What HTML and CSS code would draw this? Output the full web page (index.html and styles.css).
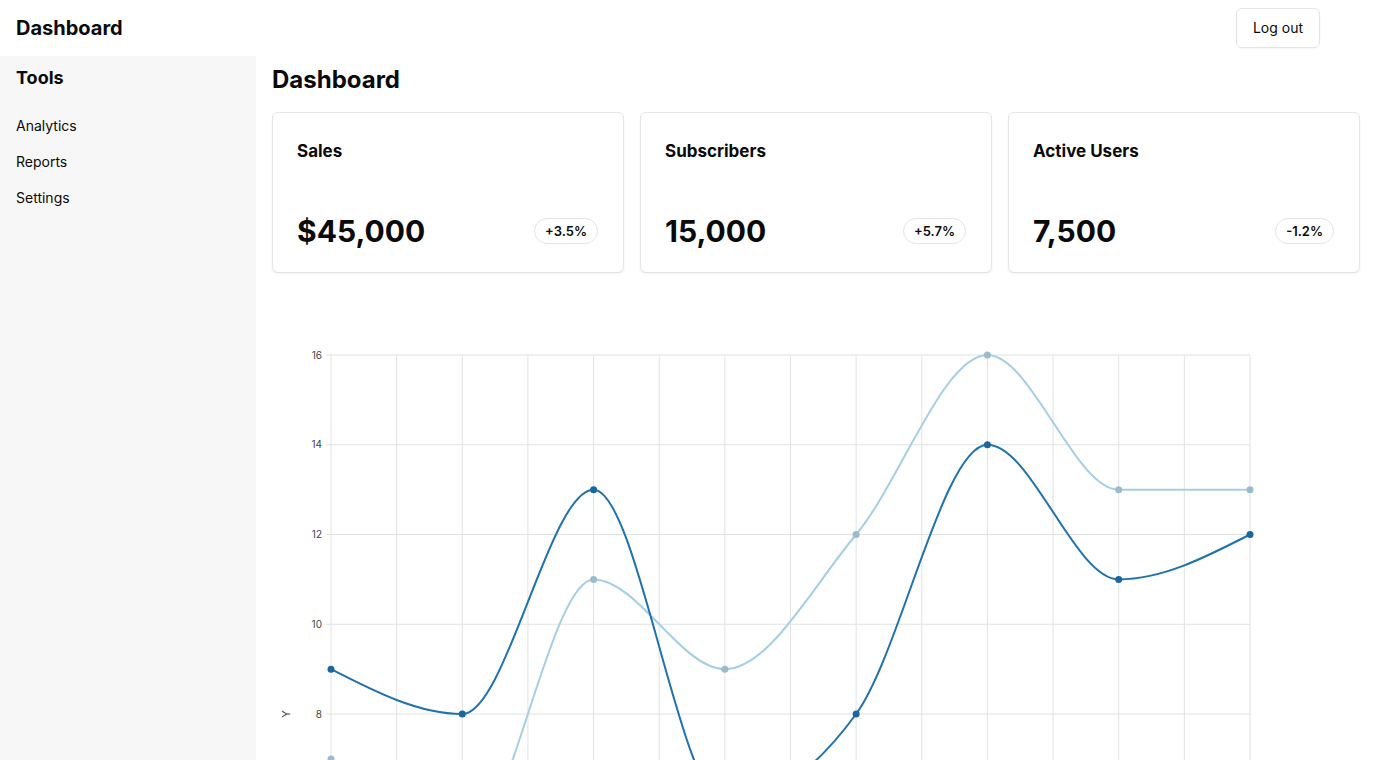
FILE: index.html
```
<!DOCTYPE html>
<html lang="en">
<head>
<meta charset="utf-8">
<title>Dashboard</title>
<link rel="stylesheet" href="styles.css">
</head>
<body>
<header class="topbar">
  <div class="brand">Dashboard</div>
  <button class="btn">Log out</button>
</header>
<div class="layout">
  <aside class="sidebar">
    <h2 class="side-title">Tools</h2>
    <nav class="side-nav">
      <a href="#">Analytics</a>
      <a href="#">Reports</a>
      <a href="#">Settings</a>
    </nav>
  </aside>
  <main class="main">
    <h1 class="page-title">Dashboard</h1>
    <section class="cards">
      <div class="card">
        <div class="card-title">Sales</div>
        <div class="card-row"><span class="card-value">$45,000</span><span class="badge">+3.5%</span></div>
      </div>
      <div class="card">
        <div class="card-title">Subscribers</div>
        <div class="card-row"><span class="card-value">15,000</span><span class="badge">+5.7%</span></div>
      </div>
      <div class="card">
        <div class="card-title">Active Users</div>
        <div class="card-row"><span class="card-value">7,500</span><span class="badge">-1.2%</span></div>
      </div>
    </section>
    <svg class="chart" width="1088" height="820" viewBox="272 289 1088 820" xmlns="http://www.w3.org/2000/svg">
      <g class="grid">
        <line x1="331" y1="355" x2="331" y2="1073"/>
        <line x1="396.64" y1="355" x2="396.64" y2="1073"/>
        <line x1="462.29" y1="355" x2="462.29" y2="1073"/>
        <line x1="527.93" y1="355" x2="527.93" y2="1073"/>
        <line x1="593.57" y1="355" x2="593.57" y2="1073"/>
        <line x1="659.21" y1="355" x2="659.21" y2="1073"/>
        <line x1="724.86" y1="355" x2="724.86" y2="1073"/>
        <line x1="790.5" y1="355" x2="790.5" y2="1073"/>
        <line x1="856.14" y1="355" x2="856.14" y2="1073"/>
        <line x1="921.79" y1="355" x2="921.79" y2="1073"/>
        <line x1="987.43" y1="355" x2="987.43" y2="1073"/>
        <line x1="1053.07" y1="355" x2="1053.07" y2="1073"/>
        <line x1="1118.71" y1="355" x2="1118.71" y2="1073"/>
        <line x1="1184.36" y1="355" x2="1184.36" y2="1073"/>
        <line x1="1250" y1="355" x2="1250" y2="1073"/>
        <line x1="326" y1="355" x2="1250" y2="355"/>
        <line x1="326" y1="444.75" x2="1250" y2="444.75"/>
        <line x1="326" y1="534.5" x2="1250" y2="534.5"/>
        <line x1="326" y1="624.25" x2="1250" y2="624.25"/>
        <line x1="326" y1="714" x2="1250" y2="714"/>
        <line x1="326" y1="803.75" x2="1250" y2="803.75"/>
        <line x1="326" y1="893.5" x2="1250" y2="893.5"/>
        <line x1="326" y1="983.25" x2="1250" y2="983.25"/>
        <line x1="326" y1="1073" x2="1250" y2="1073"/>
      </g>
      <g class="ticks">
        <text x="322" y="358.5">16</text>
        <text x="322" y="448.25">14</text>
        <text x="322" y="538">12</text>
        <text x="322" y="627.75">10</text>
        <text x="322" y="717.5">8</text>
        <text x="322" y="807.25">6</text>
        <text x="322" y="897">4</text>
        <text x="322" y="986.75">2</text>
        <text x="322" y="1076.5">0</text>
      </g>
      <text class="axis-label" transform="translate(290 714) rotate(-90)">Y</text>
      <path class="line-light" d="M331,758.88 C374.76,803.75 418.53,848.63 462.29,848.63 C506.05,848.63 549.81,579.38 593.57,579.38 C637.33,579.38 681.1,669.13 724.86,669.13 C768.62,669.13 812.38,586.87 856.14,534.5 C899.9,482.13 943.67,355 987.43,355 C1031.19,355 1074.95,489.63 1118.71,489.63 C1162.48,489.63 1206.24,489.63 1250,489.63"/>
      <path class="line-dark" d="M331,669.13 C374.76,691.56 418.53,714 462.29,714 C506.05,714 549.81,489.63 593.57,489.63 C637.33,489.63 681.1,803.75 724.86,803.75 C768.62,803.75 812.38,773.83 856.14,714 C899.9,654.18 943.67,444.75 987.43,444.75 C1031.19,444.75 1074.95,579.38 1118.71,579.38 C1162.48,579.38 1206.24,556.94 1250,534.5"/>
      <g class="dots-light">
        <circle cx="331" cy="758.88" r="3.5"/>
        <circle cx="462.29" cy="848.63" r="3.5"/>
        <circle cx="593.57" cy="579.38" r="3.5"/>
        <circle cx="724.86" cy="669.13" r="3.5"/>
        <circle cx="856.14" cy="534.5" r="3.5"/>
        <circle cx="987.43" cy="355" r="3.5"/>
        <circle cx="1118.71" cy="489.63" r="3.5"/>
        <circle cx="1250" cy="489.63" r="3.5"/>
      </g>
      <g class="dots-dark">
        <circle cx="331" cy="669.13" r="3.5"/>
        <circle cx="462.29" cy="714" r="3.5"/>
        <circle cx="593.57" cy="489.63" r="3.5"/>
        <circle cx="724.86" cy="803.75" r="3.5"/>
        <circle cx="856.14" cy="714" r="3.5"/>
        <circle cx="987.43" cy="444.75" r="3.5"/>
        <circle cx="1118.71" cy="579.38" r="3.5"/>
        <circle cx="1250" cy="534.5" r="3.5"/>
      </g>
    </svg>
  </main>
</div>
</body>
</html>
```
FILE: styles.css
```
* { box-sizing: border-box; }
html, body { margin: 0; padding: 0; }
body {
  font-family: Inter, "Noto Sans", sans-serif;
  color: #0a0a0a;
  background: #fff;
}
.topbar {
  height: 56px;
  display: flex;
  align-items: center;
  justify-content: space-between;
  padding: 0 56px 0 16px;
}
.brand {
  font-size: 20px;
  font-weight: 700;
  line-height: 28px;
}
.btn {
  font-family: inherit;
  font-size: 14px;
  color: #0a0a0a;
  background: #fff;
  border: 1px solid #e4e4e4;
  border-radius: 6px;
  height: 40px;
  padding: 0 16px;
  margin-top: -1px;
  box-shadow: 0 1px 2px rgba(0,0,0,0.04);
}
.layout {
  display: flex;
  align-items: stretch;
}
.sidebar {
  width: 256px;
  flex: none;
  background: #f7f7f7;
  padding: 10px 16px 16px;
}
.side-title {
  margin: 0 0 18px;
  font-size: 18px;
  font-weight: 700;
  line-height: 24px;
}
.side-nav a {
  display: block;
  color: #0a0a0a;
  text-decoration: none;
  font-size: 14px;
  line-height: 20px;
  padding: 8px 0;
}
.main {
  flex: 1;
  padding: 8px 16px 16px;
  min-width: 0;
}
.page-title {
  margin: 0 0 16px;
  font-size: 24px;
  line-height: 32px;
  font-weight: 700;
}
.cards {
  display: grid;
  grid-template-columns: repeat(3, 1fr);
  gap: 16px;
}
.card {
  border: 1px solid #e5e5e5;
  border-radius: 6px;
  padding: 24px;
  box-shadow: 0 1px 2px rgba(0,0,0,0.05);
  background: #fff;
}
.card-title {
  font-size: 17px;
  font-weight: 700;
  line-height: 28px;
  margin-bottom: 49px;
}
.card-row {
  display: flex;
  align-items: center;
  justify-content: space-between;
  height: 34px;
}
.card-value {
  font-size: 30px;
  font-weight: 700;
  line-height: 34px;
}
.badge {
  font-size: 13px;
  font-weight: 600;
  line-height: 18px;
  padding: 3px 10px;
  border: 1px solid #e5e5e5;
  border-radius: 999px;
  margin-right: 1px;
}
.chart {
  display: block;
  margin-top: 16px;
  overflow: hidden;
}
.grid line {
  stroke: #e2e2e2;
  stroke-width: 1;
}
.ticks text {
  font-family: Inter, "Noto Sans", sans-serif;
  font-size: 10px;
  fill: #444;
  text-anchor: end;
}
.axis-label {
  font-family: Inter, "Noto Sans", sans-serif;
  font-size: 11px;
  fill: #444;
  text-anchor: middle;
}
.line-light {
  fill: none;
  stroke: #a6cee3;
  stroke-width: 2;
}
.line-dark {
  fill: none;
  stroke: #1f72ad;
  stroke-width: 2;
}
.dots-light circle { fill: #9bbbcc; }
.dots-dark circle { fill: #1c66a0; }
```
